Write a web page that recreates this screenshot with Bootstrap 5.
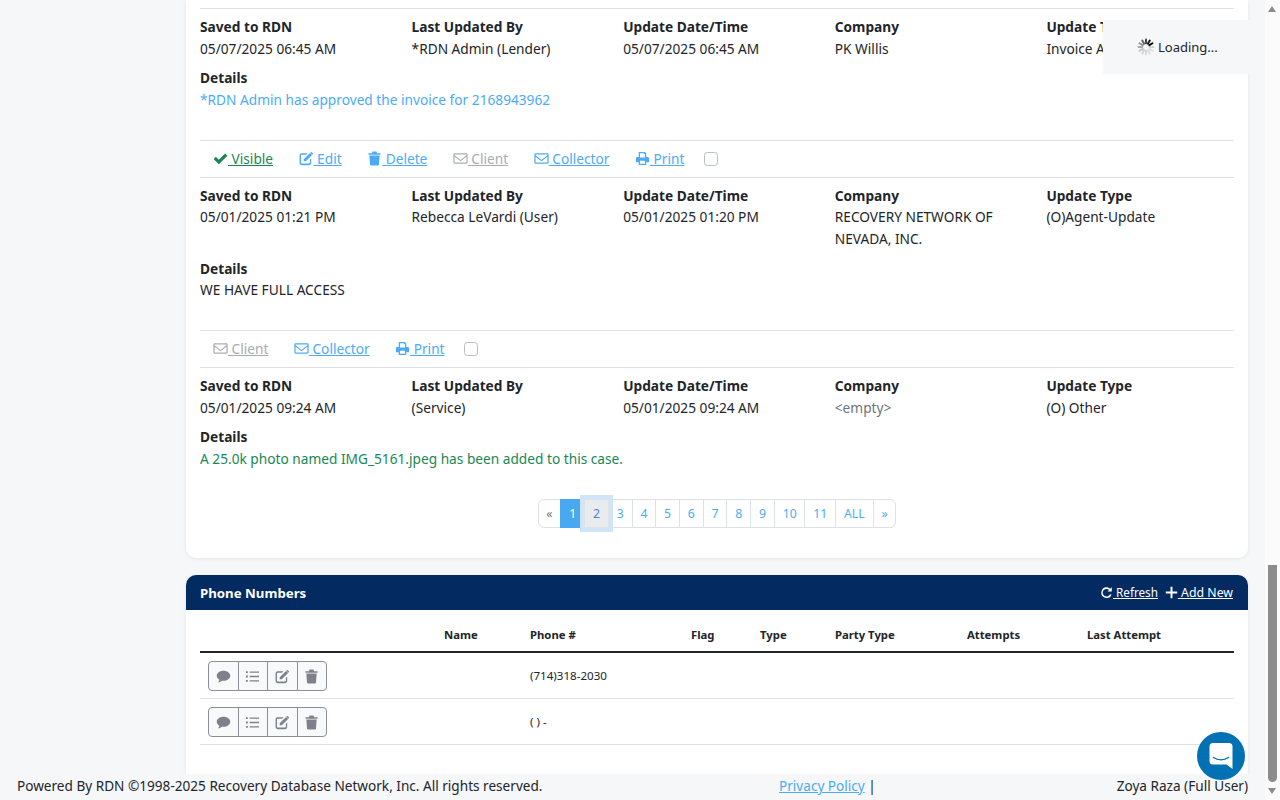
<!DOCTYPE html>
<html lang="en">
<head>
  <meta charset="UTF-8" />
  <meta name="viewport" content="width=device-width, initial-scale=1.0" />
  <title>Case Updates</title>
  <link href="https://cdn.jsdelivr.net/npm/bootstrap@5.3.3/dist/css/bootstrap.min.css" rel="stylesheet" />
  <style>
    html, body { height: 800px; overflow: hidden; }
    body { background: #f6f7f9; color: #212529; font-family: "Noto Sans", "Open Sans", sans-serif; font-size: 13.7px; line-height: 22px; }
    .page-wrap { height: 800px; overflow: hidden; padding: 0 32px 0 186px; }
    .panel { background: #fff; border-radius: 0 0 10px 10px; box-shadow: 0 1px 4px rgba(0,0,0,.07); padding: 8px 14px 0; height: 558px; }
    .update-block { border-top: 1px solid #dee2e6; padding-top: 7px; }
    .update-block .row { margin-bottom: 7px; }
    .update-block b, .update-head { font-weight: 700; display: block; line-height: 22px; }
    .block-first { height: 132px; }
    .block-second { height: 153px; padding-top: 7.5px; }
    .block-second .row { margin-bottom: 8px; }
    .block-second b { line-height: 20.5px; }
    .block-second .update-head { line-height: 21px; }
    .block-third { height: 132px; }
    .tool-line { border-top: 1px solid #dee2e6; height: 37px; padding-left: 13px; gap: 25.5px; display: flex; align-items: center; }
    .tool-line a { color: #4dabf5; }
    .tool-line a.tool-green { color: #198754; }
    .tool-line a.tool-grey { color: #a9adb2; }
    .tool-line svg { width: 15px; height: 15px; vertical-align: -2px; fill: currentColor; }
    .tool-line .form-check-input { width: 14px; height: 14px; margin: 0 0 0 -6px; border-color: #b9bdc2; }
    .txt-blue { color: #4dabf5; }
    .txt-green { color: #198754; }
    .txt-muted { color: #6c757d; }
    .pager-row .page-link { color: #4dabf5; font-size: 12.25px; line-height: 19px; padding: 4px 7.85px; border-color: #dee2e6; }
    .pager-row .active .page-link { background: #4aa8f0; border-color: #4aa8f0; color: #fff; }
    .pager-row .disabled .page-link { color: #6c757d; background: #fff; }
    .pager-row .page-link.is-focus { background: #e9ecef; color: #4a84c0; box-shadow: 0 0 0 4px #cfe5f9; z-index: 3; position: relative; }
    .phones { background: #fff; border-radius: 10px 10px 0 0; margin-top: 17px; height: 260px; box-shadow: 0 1px 4px rgba(0,0,0,.07); }
    .phones-head { background: #032b61; color: #fff; height: 35px; padding: 0 15px 0 14px; border-radius: 10px 10px 0 0; }
    .phones-head .phones-title { font-weight: 700; font-size: 13.25px; }
    .phones-head a { color: #fff; font-size: 12.3px; }
    .phones-head a.link-refresh { font-size: 11.7px; }
    .phones-head svg { width: 13px; height: 13px; fill: currentColor; vertical-align: -1.5px; }
    .phones-head .head-links { gap: 7px; }
    .phones-body { padding: 8px 14px 0; }
    .phones-body table { table-layout: fixed; font-size: 11.6px; margin: 0; }
    .phones-body th { font-size: 11.3px; font-weight: 700; padding: 6px 8px 5px; line-height: 22px; }
    .phones-body td { padding: 8px 8px 7px; vertical-align: middle; line-height: 22px; height: 46px; }
    .phones-body .table-group-divider { border-top-color: #212529; }
    .cw-0 { width: 236px; } .cw-1 { width: 86px; } .cw-2 { width: 161px; } .cw-3 { width: 69px; }
    .cw-4 { width: 75px; } .cw-5 { width: 132px; } .cw-6 { width: 120px; }
    .row-tools .btn { background: #f8f9fa; border-color: #8a8f98; color: #7d828a; width: 30.5px; height: 30px; padding: 0; display: flex; align-items: center; justify-content: center; }
    .row-tools svg { width: 15px; height: 15px; fill: currentColor; }
    .foot-bar { position: fixed; left: 0; right: 14px; bottom: 0; height: 26px; background: #f6f7f9; padding: 0 18px 0 17px; font-size: 13.6px; line-height: 24px; display: flex; }
    .foot-bar .foot-left { width: 762px; }
    .foot-bar a { color: #4dabf5; }
    .foot-bar .foot-right { margin-left: auto; }
    .load-box { position: fixed; top: 20px; left: 1103px; width: 163px; height: 54px; background: #f6f7f9; padding-left: 34px; gap: 3px; font-size: 13px; }
    .load-box svg { width: 18px; height: 18px; }
    .chat-btn { position: fixed; left: 1197px; top: 732px; width: 48px; height: 48px; border-radius: 50%; background: #0071b2; z-index: 5; }
    .chat-btn svg { width: 24px; height: 28px; }
    .fake-scroll { position: fixed; top: 0; right: 0; width: 15px; height: 800px; background: #fbfbfb; }
    .fake-thumb { position: absolute; left: 3px; width: 9px; top: 565px; height: 217px; background: #8c8c8c; border-radius: 0 0 5px 5px; }
    .arrow-up, .arrow-down { position: absolute; left: 3px; width: 0; height: 0; border-left: 4.5px solid transparent; border-right: 4.5px solid transparent; }
    .arrow-up { top: 6px; border-bottom: 6px solid #8c8c8c; }
    .arrow-down { bottom: 6px; border-top: 6px solid #8c8c8c; }
  </style>
</head>
<body>

  <svg width="0" height="0" class="d-none">
    <symbol id="i-check" viewBox="0 0 16 16"><path d="M.6 8.600 3 6.200 6.200 9.400 13 2.600 15.400 5 6.200 14.200z"/></symbol>
    <symbol id="i-edit" viewBox="0 0 16 16"><path d="M2.800 2.500H9L7.600 3.900H3a.9.9 0 0 0-.9.9v7.700c0 .5.4.9.9.9h7.700c.5 0 .9-.4.9-.9V9.300L13 7.900v5a2.200 2.200 0 0 1-2.200 2.200H2.800A2.200 2.200 0 0 1 .6 12.900V4.700c0-1.200 1-2.200 2.200-2.200zM5 8.800 11.800 2 14 4.200 7.200 11H5zM12.600 1.200c.3-.3.7-.3 1 0l1.200 1.200c.3.3.3.7 0 1l-.5.5L12 1.700z"/></symbol>
    <symbol id="i-trash" viewBox="0 0 16 16"><path d="M1.500 2.400h3.700l.7-1.800h4.200l.7 1.800h3.700v1.700h-13zM2.500 4.900h11l-.7 9.500c0 .6-.5 1-1 1H4.200c-.5 0-1-.4-1-1z"/></symbol>
    <symbol id="i-mail" viewBox="0 0 16 16"><path fill-rule="evenodd" d="M1.700 2.500h12.600c.7 0 1.300.6 1.300 1.300v8.400c0 .7-.6 1.300-1.300 1.300H1.700c-.7 0-1.300-.6-1.300-1.300V3.800c0-.7.6-1.300 1.300-1.300zm0 1.200v.9L8 9.500l6.300-4.900v-.9zm12.600 2.400L8 11 1.700 6.100v6.200h12.600z"/></symbol>
    <symbol id="i-print" viewBox="0 0 16 16"><path fill-rule="evenodd" d="M4 1h6.500L12 2.500V6.300h1.500c.9 0 1.500.6 1.500 1.500V12h-3v3H4v-3H1V7.800c0-.9.6-1.500 1.500-1.500H4zm1.400 1.400v4.500h5.200V3.300h-1V2.400zM5.400 10.500v3.100h5.200v-3.100z"/></symbol>
    <symbol id="i-comment" viewBox="0 0 16 16"><path d="M8 1.800c4 0 7.200 2.400 7.200 5.400S12 12.600 8 12.600c-.6 0-1.100 0-1.600-.1-1 .9-2.400 1.500-4.200 1.700.8-.8 1.300-1.700 1.500-2.700C1.900 10.600.8 9 .8 7.200.8 4.200 4 1.800 8 1.800z"/></symbol>
    <symbol id="i-list" viewBox="0 0 16 16"><path d="M1 2.300h2v2H1zM5 2.600h10v1.400H5zM1 7h2v2H1zM5 7.300h10v1.400H5zM1 11.700h2v2H1zM5 12h10v1.400H5z"/></symbol>
    <symbol id="i-refresh" viewBox="0 0 16 16"><path d="M8 1.500c1.800 0 3.400.7 4.500 1.900L14.500 1.500v5.300H9.200l2-2A4.700 4.700 0 1 0 12.400 10l1.800.9A6.600 6.600 0 1 1 8 1.500z"/></symbol>
    <symbol id="i-plus" viewBox="0 0 16 16"><path d="M6.800 1h2.400v5.800H15v2.400H9.200V15H6.800V9.200H1V6.800h5.800z"/></symbol>
  </svg>

  <div class="page-wrap">
    <div class="panel">

      <div class="update-block block-first">
        <div class="row">
          <div class="col"><b>Saved to RDN</b>05/07/2025 06:45 AM</div>
          <div class="col"><b>Last Updated By</b>*RDN Admin (Lender)</div>
          <div class="col"><b>Update Date/Time</b>05/07/2025 06:45 AM</div>
          <div class="col"><b>Company</b>PK Willis</div>
          <div class="col"><b>Update Type</b>Invoice Approved</div>
        </div>
        <span class="update-head">Details</span>
        <span class="txt-blue">*RDN Admin has approved the invoice for 2168943962</span>
      </div>

      <div class="tool-line">
        <a class="tool-green" href="#"><svg><use href="#i-check"/></svg>&nbsp;Visible</a>
        <a href="#"><svg><use href="#i-edit"/></svg>&nbsp;Edit</a>
        <a href="#"><svg><use href="#i-trash"/></svg>&nbsp;Delete</a>
        <a class="tool-grey" href="#"><svg><use href="#i-mail"/></svg>&nbsp;Client</a>
        <a href="#"><svg><use href="#i-mail"/></svg>&nbsp;Collector</a>
        <a href="#"><svg><use href="#i-print"/></svg>&nbsp;Print</a>
        <input class="form-check-input" type="checkbox" />
      </div>

      <div class="update-block block-second">
        <div class="row">
          <div class="col"><b>Saved to RDN</b>05/01/2025 01:21 PM</div>
          <div class="col"><b>Last Updated By</b>Rebecca LeVardi (User)</div>
          <div class="col"><b>Update Date/Time</b>05/01/2025 01:20 PM</div>
          <div class="col"><b>Company</b>RECOVERY NETWORK OF NEVADA, INC.</div>
          <div class="col"><b>Update Type</b>(O)Agent-Update</div>
        </div>
        <span class="update-head">Details</span>
        WE HAVE FULL ACCESS
      </div>

      <div class="tool-line">
        <a class="tool-grey" href="#"><svg><use href="#i-mail"/></svg>&nbsp;Client</a>
        <a href="#"><svg><use href="#i-mail"/></svg>&nbsp;Collector</a>
        <a href="#"><svg><use href="#i-print"/></svg>&nbsp;Print</a>
        <input class="form-check-input" type="checkbox" />
      </div>

      <div class="update-block block-third">
        <div class="row">
          <div class="col"><b>Saved to RDN</b>05/01/2025 09:24 AM</div>
          <div class="col"><b>Last Updated By</b>(Service)</div>
          <div class="col"><b>Update Date/Time</b>05/01/2025 09:24 AM</div>
          <div class="col"><b>Company</b><span class="txt-muted">&lt;empty&gt;</span></div>
          <div class="col"><b>Update Type</b>(O) Other</div>
        </div>
        <span class="update-head">Details</span>
        <span class="txt-green">A 25.0k photo named IMG_5161.jpeg has been added to this case.</span>
      </div>

      <nav class="pager-row d-flex justify-content-center">
        <ul class="pagination mb-0">
          <li class="page-item disabled"><a class="page-link" href="#">«</a></li>
          <li class="page-item active"><a class="page-link" href="#">1</a></li>
          <li class="page-item"><a class="page-link is-focus" href="#">2</a></li>
          <li class="page-item"><a class="page-link" href="#">3</a></li>
          <li class="page-item"><a class="page-link" href="#">4</a></li>
          <li class="page-item"><a class="page-link" href="#">5</a></li>
          <li class="page-item"><a class="page-link" href="#">6</a></li>
          <li class="page-item"><a class="page-link" href="#">7</a></li>
          <li class="page-item"><a class="page-link" href="#">8</a></li>
          <li class="page-item"><a class="page-link" href="#">9</a></li>
          <li class="page-item"><a class="page-link" href="#">10</a></li>
          <li class="page-item"><a class="page-link" href="#">11</a></li>
          <li class="page-item"><a class="page-link" href="#">ALL</a></li>
          <li class="page-item"><a class="page-link" href="#">»</a></li>
        </ul>
      </nav>
    </div>

    <div class="phones">
      <div class="phones-head d-flex justify-content-between align-items-center">
        <span class="phones-title">Phone Numbers</span>
        <span class="head-links d-flex align-items-baseline">
          <a class="link-refresh" href="#"><svg><use href="#i-refresh"/></svg>&nbsp;Refresh</a>
          <a href="#"><svg><use href="#i-plus"/></svg>&nbsp;Add New</a>
        </span>
      </div>
      <div class="phones-body">
        <table class="table">
          <thead>
            <tr>
              <th class="cw-0"></th>
              <th class="cw-1">Name</th>
              <th class="cw-2">Phone #</th>
              <th class="cw-3">Flag</th>
              <th class="cw-4">Type</th>
              <th class="cw-5">Party Type</th>
              <th class="cw-6">Attempts</th>
              <th>Last Attempt</th>
            </tr>
          </thead>
          <tbody class="table-group-divider">
            <tr>
              <td>
                <div class="btn-group row-tools">
                  <button class="btn btn-sm" type="button"><svg><use href="#i-comment"/></svg></button>
                  <button class="btn btn-sm" type="button"><svg><use href="#i-list"/></svg></button>
                  <button class="btn btn-sm" type="button"><svg><use href="#i-edit"/></svg></button>
                  <button class="btn btn-sm" type="button"><svg><use href="#i-trash"/></svg></button>
                </div>
              </td>
              <td></td><td>(714)318-2030</td><td></td><td></td><td></td><td></td><td></td>
            </tr>
            <tr>
              <td>
                <div class="btn-group row-tools">
                  <button class="btn btn-sm" type="button"><svg><use href="#i-comment"/></svg></button>
                  <button class="btn btn-sm" type="button"><svg><use href="#i-list"/></svg></button>
                  <button class="btn btn-sm" type="button"><svg><use href="#i-edit"/></svg></button>
                  <button class="btn btn-sm" type="button"><svg><use href="#i-trash"/></svg></button>
                </div>
              </td>
              <td></td><td>( ) -</td><td></td><td></td><td></td><td></td><td></td>
            </tr>
          </tbody>
        </table>
      </div>
    </div>
  </div>

  <!-- footer -->
  <div class="foot-bar">
    <div class="foot-left">Powered By RDN ©1998-2025 Recovery Database Network, Inc. All rights reserved.</div>
    <div><a href="#">Privacy Policy</a> |</div>
    <div class="foot-right">Zoya Raza (Full User)</div>
  </div>

  <div class="load-box d-flex align-items-center">
    <svg viewBox="0 0 24 24" stroke-width="2.6" stroke-linecap="round" stroke="#000">
      <path d="M12 2v5" opacity=".75"/>
      <path d="M17 3.300 14.500 7.700" opacity=".9"/>
      <path d="M20.700 7 16.300 9.500"/>
      <path d="M22 12h-5" opacity=".15"/>
      <path d="M20.700 17 16.300 14.500" opacity=".1"/>
      <path d="M17 20.700 14.500 16.300" opacity=".1"/>
      <path d="M12 22v-5" opacity=".12"/>
      <path d="M7 20.700 9.500 16.300" opacity=".15"/>
      <path d="M3.300 17 7.700 14.500" opacity=".2"/>
      <path d="M2 12h5" opacity=".3"/>
      <path d="M3.300 7 7.700 9.500" opacity=".4"/>
      <path d="M7 3.300 9.500 7.700" opacity=".6"/>
    </svg>
    <span>Loading...</span>
  </div>

  <div class="chat-btn d-flex align-items-center justify-content-center">
    <svg viewBox="0 0 24 28"><path fill="#fff" d="M4 1h16a3.500 3.500 0 0 1 3.500 3.500V27l-6-4.500H4A3.500 3.500 0 0 1 .5 19V4.500A3.500 3.500 0 0 1 4 1z"/><path d="M4.500 15.500c4.500 3 10.500 3 15 0" fill="none" stroke="#0071b2" stroke-width="1.5" stroke-linecap="round"/></svg>
  </div>

  <div class="fake-scroll">
    <div class="arrow-up"></div>
    <div class="fake-thumb"></div>
    <div class="arrow-down"></div>
  </div>

  <script src="https://cdn.jsdelivr.net/npm/bootstrap@5.3.3/dist/js/bootstrap.bundle.min.js"></script>
</body>
</html>
